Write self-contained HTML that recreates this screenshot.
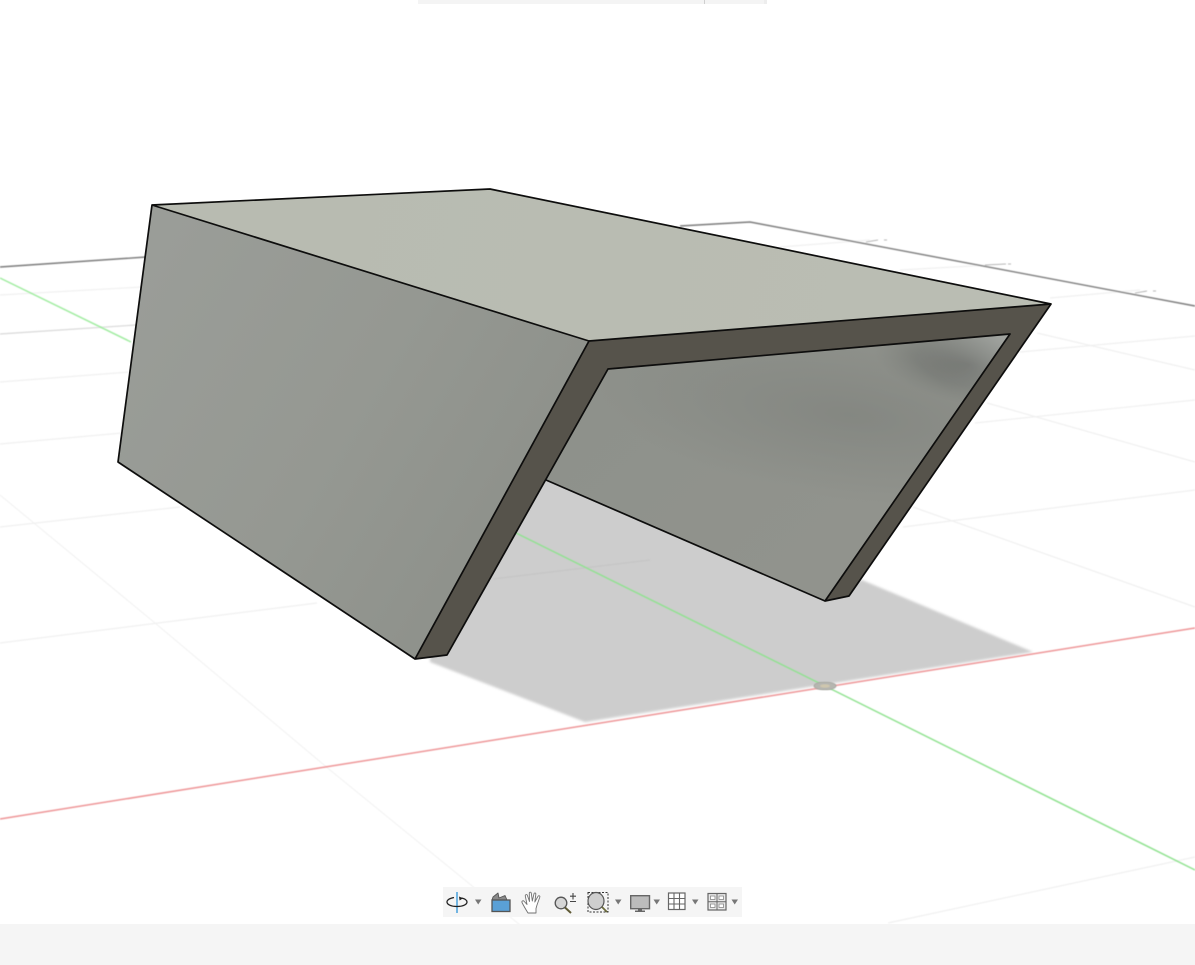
<!DOCTYPE html>
<html lang="en">
<head>
<meta charset="utf-8">
<title>3D Viewport</title>
<style>
html,body{margin:0;padding:0;background:#fff;width:1195px;height:965px;overflow:hidden}
svg{display:block;position:absolute;left:0;top:0}
</style>
</head>
<body>
<svg width="1195" height="965" viewBox="0 0 1195 965" xmlns="http://www.w3.org/2000/svg">
<defs>
<linearGradient id="gLeft" gradientUnits="userSpaceOnUse" x1="120" y1="300" x2="560" y2="560">
<stop offset="0" stop-color="#9a9d98"/><stop offset=".5" stop-color="#959892"/><stop offset="1" stop-color="#8c8f89"/>
</linearGradient>
<linearGradient id="gTop" gradientUnits="userSpaceOnUse" x1="300" y1="200" x2="900" y2="320">
<stop offset="0" stop-color="#b8bbb1"/><stop offset="1" stop-color="#babdb3"/>
</linearGradient>
<linearGradient id="gIn" gradientUnits="userSpaceOnUse" x1="620" y1="380" x2="800" y2="570">
<stop offset="0" stop-color="#8e918b"/><stop offset="1" stop-color="#91938d"/>
</linearGradient>
<radialGradient id="gBlob" gradientUnits="userSpaceOnUse" cx="0" cy="0" r="1" gradientTransform="translate(968 364) rotate(10) scale(95 40)">
<stop offset="0" stop-color="#626461" stop-opacity=".85"/><stop offset=".55" stop-color="#6d706c" stop-opacity=".5"/><stop offset="1" stop-color="#7a7d78" stop-opacity="0"/>
</radialGradient>
<radialGradient id="gBlob2" gradientUnits="userSpaceOnUse" cx="0" cy="0" r="1" gradientTransform="translate(850 415) rotate(8) scale(260 85)">
<stop offset="0" stop-color="#7e817c" stop-opacity=".65"/><stop offset="1" stop-color="#7e817c" stop-opacity="0"/>
</radialGradient>
<linearGradient id="gCorner" gradientUnits="userSpaceOnUse" x1="960" y1="400" x2="1010" y2="345">
<stop offset="0" stop-color="#8d908b" stop-opacity="0"/><stop offset="1" stop-color="#a3a6a2" stop-opacity=".85"/>
</linearGradient>
<clipPath id="cIn"><polygon points="600,369 1010,334 825,601 540,478"/></clipPath>
<filter id="soft" x="-5%" y="-5%" width="110%" height="110%"><feGaussianBlur stdDeviation="0.45"/></filter>
<filter id="crisp" x="-5%" y="-5%" width="110%" height="110%"><feGaussianBlur stdDeviation="0.25"/></filter>
<filter id="soft2" x="-5%" y="-5%" width="110%" height="110%"><feGaussianBlur stdDeviation="1.2"/></filter>
</defs>

<!-- top bar remnant -->
<rect x="418" y="0" width="349" height="4" fill="#f4f4f4"/>
<rect x="704" y="0" width="1" height="4" fill="#cfcfcf"/>
<rect x="764" y="0" width="3" height="4" fill="#ededed"/>

<!-- grid -->
<g filter="url(#soft)" fill="none">
<g stroke="#f0f0f0" stroke-width="1.2">
<path d="M0 295L142 287"/>
<path d="M0 382L130 372"/>
<path d="M0 444L122 433"/>
<path d="M0 527L180 507"/>
<path d="M0 643L317 603"/>
<path d="M975 423L1195 400"/>
<path d="M987 403L1195 462"/>
<path d="M903 527L1195 490"/>
<path d="M913 507L1195 607"/>
<path d="M1020 352L1195 336"/>
<path d="M1037 333L1195 370"/>
<path d="M888 923L1195 857"/>
<path d="M780 247L870 240"/>
<path d="M900 270L990 265"/>
<path d="M1050 298L1140 290"/>
</g>
<path d="M0 495L155 623L330 770L520 925" stroke="#f1f1f1" stroke-width="1"/>
<path d="M0 334L136 325" stroke="#d8d8d8" stroke-width="1.2"/>
<path d="M0 267L146 257M680 226L750 222L1195 306" stroke="#7c7c7c" stroke-width="1.4"/>
<g stroke="#a0a0a0" stroke-width=".8">
<path d="M866 242L878 240M884 240L887 240"/>
<path d="M985 265L1006 264M1008 264L1011 264"/>
<path d="M1135 293L1147 291M1153 291L1156 291"/>
</g>
</g>

<!-- shadow -->
<polygon points="560,450 430,640 430,662 585,722 1033,652 862,580 849,585 700,470" fill="#cdcdcd" filter="url(#soft2)"/>
<g filter="url(#soft)" fill="none">
<path d="M493 579L650 560" stroke="#c5c5c5" stroke-width="1.2"/>
<path d="M0 278L131 342" stroke="#a0eca0" stroke-width="1.5"/>
<path d="M516 533L825 686L1195 870" stroke="#90e290" stroke-width="1.5"/>
<path d="M0 819L1195 628" stroke="#ee9597" stroke-width="1.5"/>
</g>
<ellipse cx="825" cy="686" rx="11" ry="4" fill="#b6b6b0" stroke="#a3a39d" stroke-width=".8" filter="url(#soft)"/>
<ellipse cx="825" cy="686" rx="5" ry="1.800" fill="#cfc6ae" filter="url(#soft)"/>

<!-- solid -->
<g filter="url(#crisp)">
<polygon points="600,369 1010,334 825,601 540,478" fill="url(#gIn)"/>
<g clip-path="url(#cIn)">
<rect x="530" y="320" width="510" height="290" fill="url(#gBlob2)"/>
<rect x="800" y="320" width="240" height="120" fill="url(#gBlob)"/>
<rect x="900" y="320" width="120" height="100" fill="url(#gCorner)"/>
</g>
<polygon points="152,205 490,189 1051,304 589,341" fill="url(#gTop)"/>
<polygon points="152,205 589,341 415,659 118,462" fill="url(#gLeft)"/>
<polygon points="589,341 1051,304 849,596 825,601 1010,334 608,369 447,655 415,659" fill="#57534c"/>
<g fill="none" stroke="#0c0c0a" stroke-width="1.7" stroke-linejoin="round">
<path d="M152 205L490 189L1051 304L849 596L825 601L1010 334L608 369L447 655L415 659L118 462Z"/>
<path d="M152 205L589 341L415 659"/>
<path d="M589 341L1051 304"/>
<path d="M546 480L825 601"/>
</g>
</g>

<!-- bottom bar -->
<rect x="0" y="924" width="1195" height="41" fill="#f5f5f5"/>

<!-- toolbar -->
<rect x="443" y="887" width="299" height="30" fill="#f5f5f5"/>
<g filter="url(#crisp)">
<!-- orbit -->
<path d="M457 892V913" stroke="#3a9ad9" stroke-width="1.4"/>
<path d="M454 897.500C449 898.500 447 900.300 447 902C447 904.500 451 906.500 457 906.500C463 906.500 467 904.500 467 902C467 900.300 465 898.800 461.500 898" fill="none" stroke="#222" stroke-width="1.300"/>
<path d="M459 896.500L463 898.300L459.600 900.500Z" fill="#222"/>
<path d="M475 899.500H481.500L478.200 904.500Z" fill="#777"/>
<!-- camera/home -->
<path d="M492 900L493 897L498 893L499 898L505 895.500L507 900Z" fill="#8a8a8a" stroke="#555" stroke-width=".9" stroke-linejoin="round"/>
<rect x="492" y="900" width="18" height="11.500" fill="#5aa0d6" stroke="#555" stroke-width="1.300"/>
<!-- hand -->
<path d="M528 913C525.500 909 523.500 905.500 522 902.500C521.500 901 523.200 900 524.300 901.500L527 904.500L525.300 896C525.100 894.500 526.900 894 527.400 895.500L529.500 901.500L529.300 893.300C529.300 891.800 531.100 891.800 531.300 893.300L532.300 901L534 893.800C534.300 892.400 536 892.800 535.800 894.300L534.800 902L538 896.300C538.700 895.100 540.200 895.800 539.800 897.100L537 905L536 908.500L536 913Z" fill="#fff" stroke="#707070" stroke-width=".9" stroke-linejoin="round"/>
<!-- zoom -->
<circle cx="561" cy="903" r="5.800" fill="#d6d6d6" stroke="#555" stroke-width="1.300"/>
<path d="M565 907.500L571 913" stroke="#5f5a35" stroke-width="2"/>
<path d="M573 893V899.500M570 896.200H576M570 901.500H576" stroke="#444" stroke-width="1.100" fill="none"/>
<!-- fit -->
<rect x="588" y="892.500" width="20" height="19.500" fill="none" stroke="#333" stroke-width="1" stroke-dasharray="2 1.500"/>
<ellipse cx="596" cy="901" rx="8" ry="8.500" fill="#cfcfcf" stroke="#555" stroke-width="1.200"/>
<path d="M602 907L607 912" stroke="#6a6a3a" stroke-width="1.800"/>
<path d="M615 899.500H621.500L618.200 904.500Z" fill="#777"/>
<!-- monitor -->
<rect x="630.700" y="895.700" width="18.800" height="13" fill="#bcbcbc" stroke="#666" stroke-width="1.400"/>
<path d="M638 909H642V910.500H645V912H635V910.500H638Z" fill="#666"/>
<path d="M653.500 899.500H660L656.700 904.500Z" fill="#777"/>
<!-- grid -->
<rect x="668.500" y="893" width="16.500" height="16.500" fill="#fff" stroke="#666" stroke-width="1.200"/>
<path d="M674 893V909.500M679.500 893V909.500M668.500 898.500H685M668.500 904H685" stroke="#666" stroke-width="1.100"/>
<path d="M692 899.500H698.500L695.200 904.500Z" fill="#777"/>
<!-- viewports -->
<rect x="708" y="893.500" width="18" height="16.500" fill="#e9e9e9" stroke="#666" stroke-width="1.200"/>
<path d="M717 893.500V910M708 901.700H726" stroke="#666" stroke-width="1"/>
<rect x="710.500" y="896" width="4.500" height="3.500" fill="#fff" stroke="#888" stroke-width=".8"/>
<rect x="719" y="896" width="4.500" height="3.500" fill="#fff" stroke="#888" stroke-width=".8"/>
<rect x="710.500" y="904" width="4.500" height="3.500" fill="#fff" stroke="#888" stroke-width=".8"/>
<rect x="719" y="904" width="4.500" height="3.500" fill="#fff" stroke="#888" stroke-width=".8"/>
<path d="M731.500 899.500H738L734.700 904.500Z" fill="#777"/>
</g>
</svg>
</body>
</html>
